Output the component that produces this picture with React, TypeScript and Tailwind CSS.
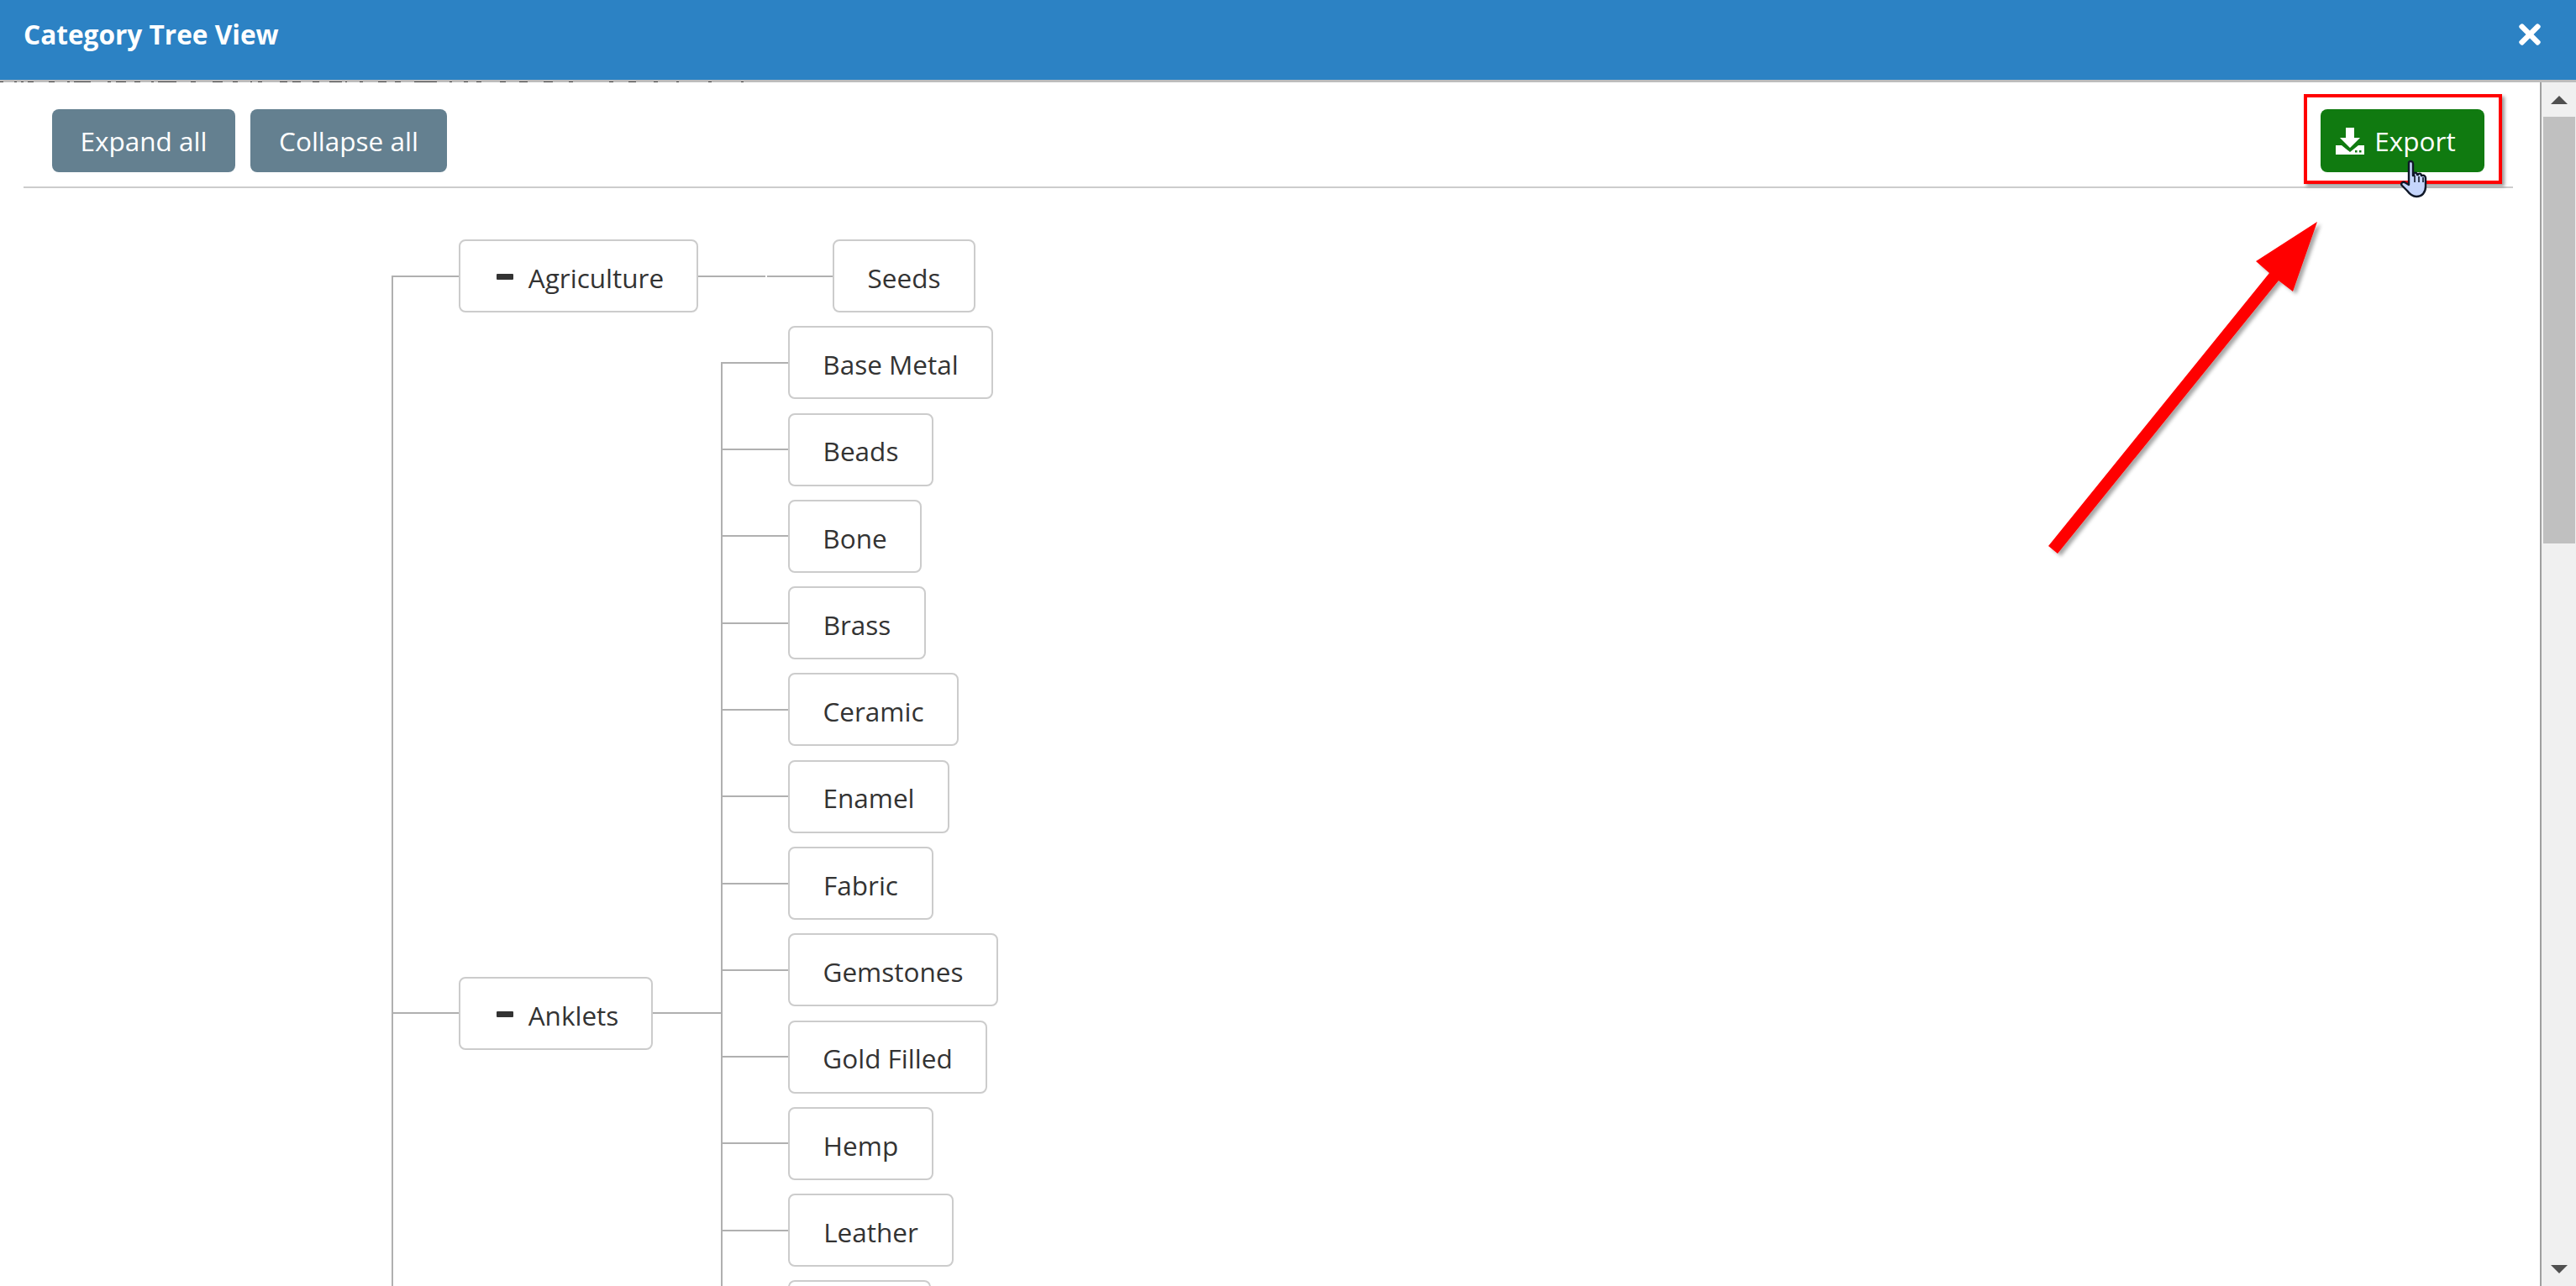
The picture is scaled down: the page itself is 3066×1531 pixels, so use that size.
import React from "react";

const leaves = ["Base Metal","Beads","Bone","Brass","Ceramic","Enamel","Fabric","Gemstones","Gold Filled","Hemp","Leather"];

const fragments: [number, number][] = [
  [0,4],[17,20],[25,28],[33,40],[58,65],[80,83],[88,108],[128,132],[138,150],[160,167],[180,183],[188,210],[227,233],[253,265],[277,283],[298,300],[307,312],[333,342],[348,358],[372,380],[392,407],[411,413],[428,432],[450,460],[470,477],[493,500],
  [500,520],[535,538],[552,557],[567,573],[595,602],[618,628],[647,658],[677,682],[725,730],[748,757],[778,783],[805,808],[843,847],[882,885],
];

function Elbow({ first, last, w }: { first?: boolean; last?: boolean; w: string }) {
  return (
    <div className={`flex flex-col self-stretch shrink-0 ${w}`}>
      <div className={`flex-1 border-b-2 border-b-[#b0b0b0] ${first ? "" : "border-l-2 border-l-[#b0b0b0]"}`} />
      <div className={`flex-1 ${last ? "" : "border-l-2 border-l-[#b0b0b0]"}`} />
    </div>
  );
}

function Node({ label, toggle, w }: { label?: string; toggle?: boolean; w: string }) {
  return (
    <div className={`flex h-[87px] shrink-0 items-center justify-center rounded-lg border-2 border-[#cccccc] bg-white text-[31.5px] text-[#333333] ${w}`}>
      {toggle && <span className="mr-[18px] ml-[4px] h-[7px] w-[20px] translate-y-[1px] rounded-[1px] bg-[#333333]" />}
      {label && <span className="translate-y-[2px] leading-none">{label}</span>}
    </div>
  );
}

const widths: Record<string, string> = {
  "Base Metal": "w-[244px]", Beads: "w-[173px]", Bone: "w-[159px]", Brass: "w-[164px]", Ceramic: "w-[203px]",
  Enamel: "w-[192px]", Fabric: "w-[173px]", Gemstones: "w-[250px]", "Gold Filled": "w-[237px]", Hemp: "w-[173px]",
  Leather: "w-[197px]",
};

export default function App() {
  return (
    <div className="relative flex h-[1531px] w-[3066px] flex-col overflow-hidden bg-white font-['Open_Sans',sans-serif]">
      <header className="flex h-[95px] shrink-0 items-center justify-between bg-[#2c82c4] pl-[28px] pr-[42px] text-white">
        <h1 className="-translate-y-[7px] text-[31.6px] font-bold">Category Tree View</h1>
        <svg viewBox="0 0 26 26" className="h-[26px] w-[26px] -translate-y-[7px]" fill="#ffffff">
          <path d="M5.5 1 13 8.5 20.5 1a2.4 2.4 0 0 1 3.4 0l1.1 1.1a2.4 2.4 0 0 1 0 3.4L17.5 13l7.5 7.5a2.4 2.4 0 0 1 0 3.4L23.9 25a2.4 2.4 0 0 1-3.4 0L13 17.5 5.5 25a2.4 2.4 0 0 1-3.4 0L1 23.9a2.4 2.4 0 0 1 0-3.4L8.5 13 1 5.5a2.4 2.4 0 0 1 0-3.4L2.1 1A2.4 2.4 0 0 1 5.5 1Z" />
        </svg>
      </header>
      <div className="relative h-[3px] shrink-0 bg-[#bdbdbd]">
        <svg className="absolute bottom-0 left-0" width="900" height="1" viewBox="0 0 900 1">
          {fragments.map(([a, b]) => (
            <rect key={a} x={a} y={0} width={b - a} height={1} fill="#3a3a3a" />
          ))}
        </svg>
      </div>
      <div className="flex min-h-0 flex-1">
        <main className="min-w-0 flex-1 overflow-hidden pl-[28px] pr-[32px]">
          <div className="flex h-[126px] items-start justify-between border-b-2 border-[#cccccc] pl-[34px] pr-[34px] pt-[32px]">
            <div className="flex gap-[18px]">
              <button className="flex h-[75px] w-[218px] items-center justify-center rounded-lg bg-[#648090] text-[31.5px] text-white">Expand all</button>
              <button className="flex h-[75px] w-[234px] items-center justify-center rounded-lg bg-[#648090] text-[31.5px] text-white">Collapse all</button>
            </div>
            <button className="flex h-[75px] w-[195px] items-center justify-center gap-[12px] rounded-lg bg-[#107a10] pr-[16px] text-[31.5px] text-white">
              <svg viewBox="0 0 34 32" className="h-[32px] w-[34px]" fill="#ffffff">
                <path d="M12 0h10v12h7L17 24 5 12h7Z" />
                <path d="M0 21h7l10 8 10-8h7v11H0Z" />
                <rect x="23" y="27" width="2.5" height="2.5" fill="#107a10" />
                <rect x="28" y="27" width="2.5" height="2.5" fill="#107a10" />
              </svg>
              Export
            </button>
          </div>
          <div className="flex flex-col pl-[438px] pt-[53px]">
            <div className="flex h-[103.27px] items-center">
              <Elbow first w="w-[80px]" />
              <Node label="Agriculture" toggle w="w-[285px]" />
              <div className="h-[2px] w-[80px] bg-[#b0b0b0]" />
              <div className="ml-[2px] h-[2px] w-[78px] bg-[#b0b0b0]" />
              <Node label="Seeds" w="w-[170px]" />
            </div>
            <div className="flex items-center">
              <Elbow w="w-[80px]" />
              <Node label="Anklets" toggle w="w-[231px]" />
              <div className="h-[2px] w-[81px] bg-[#b0b0b0]" />
              <div className="flex flex-col">
                {leaves.map((l, i) => (
                  <div key={l} className="flex h-[103.27px] items-center">
                    <Elbow first={i === 0} w="w-[80px]" />
                    <Node label={l} w={widths[l]} />
                  </div>
                ))}
                {[0, 1, 2, 3, 4].map((i) => (
                  <div key={i} className="flex h-[103.27px] items-center">
                    <Elbow last={i === 4} w="w-[80px]" />
                    <Node w="w-[170px]" />
                  </div>
                ))}
              </div>
            </div>
          </div>
        </main>
        <aside className="flex w-[43px] shrink-0 flex-col items-center border-l-2 border-[#a0a0a0] bg-[#f0f0f0]">
          <div className="flex h-[41px] w-full shrink-0 items-center justify-center">
            <div className="h-0 w-0 border-x-[10px] border-b-[10px] border-x-transparent border-b-[#505050]" />
          </div>
          <div className="h-[508px] w-[38px] bg-[#c0c0c0]" />
          <div className="flex-1" />
          <div className="flex h-[41px] w-full shrink-0 items-center justify-center">
            <div className="h-0 w-0 border-x-[10px] border-t-[10px] border-x-transparent border-t-[#505050]" />
          </div>
        </aside>
      </div>

      {/* annotation overlay */}
      <div className="absolute left-[2742px] top-[112px] h-[107px] w-[236px] border-[4px] border-[#ff0000] shadow-[3px_3px_4px_rgba(0,0,0,0.4)]" />
      <svg className="absolute left-[2400px] top-[240px]" width="400" height="440" viewBox="0 0 400 440">
        <defs>
          <filter id="s" x="-20%" y="-20%" width="140%" height="140%">
            <feDropShadow dx="4" dy="3" stdDeviation="2" floodColor="#000" floodOpacity="0.35" />
          </filter>
        </defs>
        <path filter="url(#s)" fill="#ff0000" d="M38 410 49 419 312 94 329 107 358 24 285 71 301 85Z" />
      </svg>
      <svg className="absolute left-[2856px] top-[190px]" width="40" height="46" viewBox="0 0 40 46">
        <path d="M11 3c2-2 5-1 5 2v14l1 0V16c2-1 4 0 4 2h1v-1c2-1 4 0 4 2h1c2-1 4 1 4 3v10c0 7-4 12-11 12-5 0-8-3-11-7l-6-6c-2-2 0-5 3-4l5 3V5Z" fill="#c5d5fb" stroke="#101828" strokeWidth="2.4" strokeLinejoin="round" />
        <path d="M18 19v8M23 20v7M28 21v6" stroke="#101828" strokeWidth="1.6" />
      </svg>
    </div>
  );
}
